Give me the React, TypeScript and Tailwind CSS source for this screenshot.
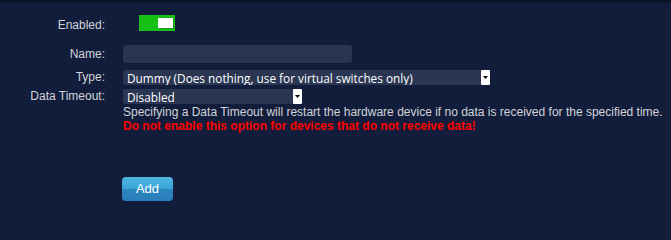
import { useState } from 'react';

function SelectBox({ value, width }: { value: string; width: string }) {
  return (
    <div className={`flex h-[15px] items-stretch ${width}`}>
      <div className="flex-1 rounded-l-[3px] bg-[#2a3652] pl-[4px] text-[11.8px] leading-[16px] text-white font-['Open_Sans',sans-serif] whitespace-nowrap overflow-hidden">
        {value}
      </div>
      <div className="flex w-[9px] items-center justify-center rounded-[1px] bg-white">
        <svg width="5" height="3" viewBox="0 0 5 3">
          <path d="M0 0h5L2.5 3z" fill="#000" />
        </svg>
      </div>
    </div>
  );
}

export default function App() {
  const [enabled, setEnabled] = useState(true);

  return (
    <div className="min-h-screen w-full bg-[#121d3b] border-t-[3px] border-[#0b1128] font-['Liberation_Sans',Arial,sans-serif] text-[12px] text-[#d2d4d9]">
      <div className="grid grid-cols-[105px_1fr] gap-x-[18px] pt-[12px]">
        {/* Enabled */}
        <div className="text-right leading-[16px] pt-[2px]">Enabled:</div>
        <div className="pl-[16px]">
          <button
            onClick={() => setEnabled((e) => !e)}
            className={`flex h-[16px] w-[36px] items-center pr-[2px] pl-[2px] ${enabled ? 'justify-end bg-[#14c014]' : 'justify-start bg-[#555]'}`}
          >
            <span className="h-[10px] w-[15px] bg-white shadow-[1px_1px_0_#0e9a0e]" />
          </button>
        </div>

        {/* Name */}
        <div className="mt-[12px] text-right leading-[18px]">Name:</div>
        <div className="mt-[12px]">
          <div className="h-[18px] w-[229px] rounded-[3px] bg-[#283551]" />
        </div>

        {/* Type */}
        <div className="mt-[7px] text-right leading-[15px]">Type:</div>
        <div className="mt-[7px]">
          <SelectBox value="Dummy (Does nothing, use for virtual switches only)" width="w-[367px]" />
        </div>

        {/* Data Timeout */}
        <div className="mt-[4px] text-right leading-[15px]">Data Timeout:</div>
        <div className="mt-[4px]">
          <SelectBox value="Disabled" width="w-[179px]" />
          <div className="mt-[1px] leading-[14px] whitespace-nowrap">
            Specifying a Data Timeout will restart the hardware device if no data is received for the specified time.
          </div>
          <div className="leading-[14px] font-bold text-[#ff0000] whitespace-nowrap">
            Do not enable this option for devices that do not receive data!
          </div>
        </div>

        {/* Add */}
        <div />
        <div className="mt-[44px]">
          <button className="-ml-[1px] h-[24px] w-[51px] rounded-[4px] bg-[linear-gradient(to_bottom,#4db8e2_0%,#3aa3d6_50%,#2b86c0_52%,#2a7db8_100%)] text-[13px] text-white">
            Add
          </button>
        </div>
      </div>
    </div>
  );
}
